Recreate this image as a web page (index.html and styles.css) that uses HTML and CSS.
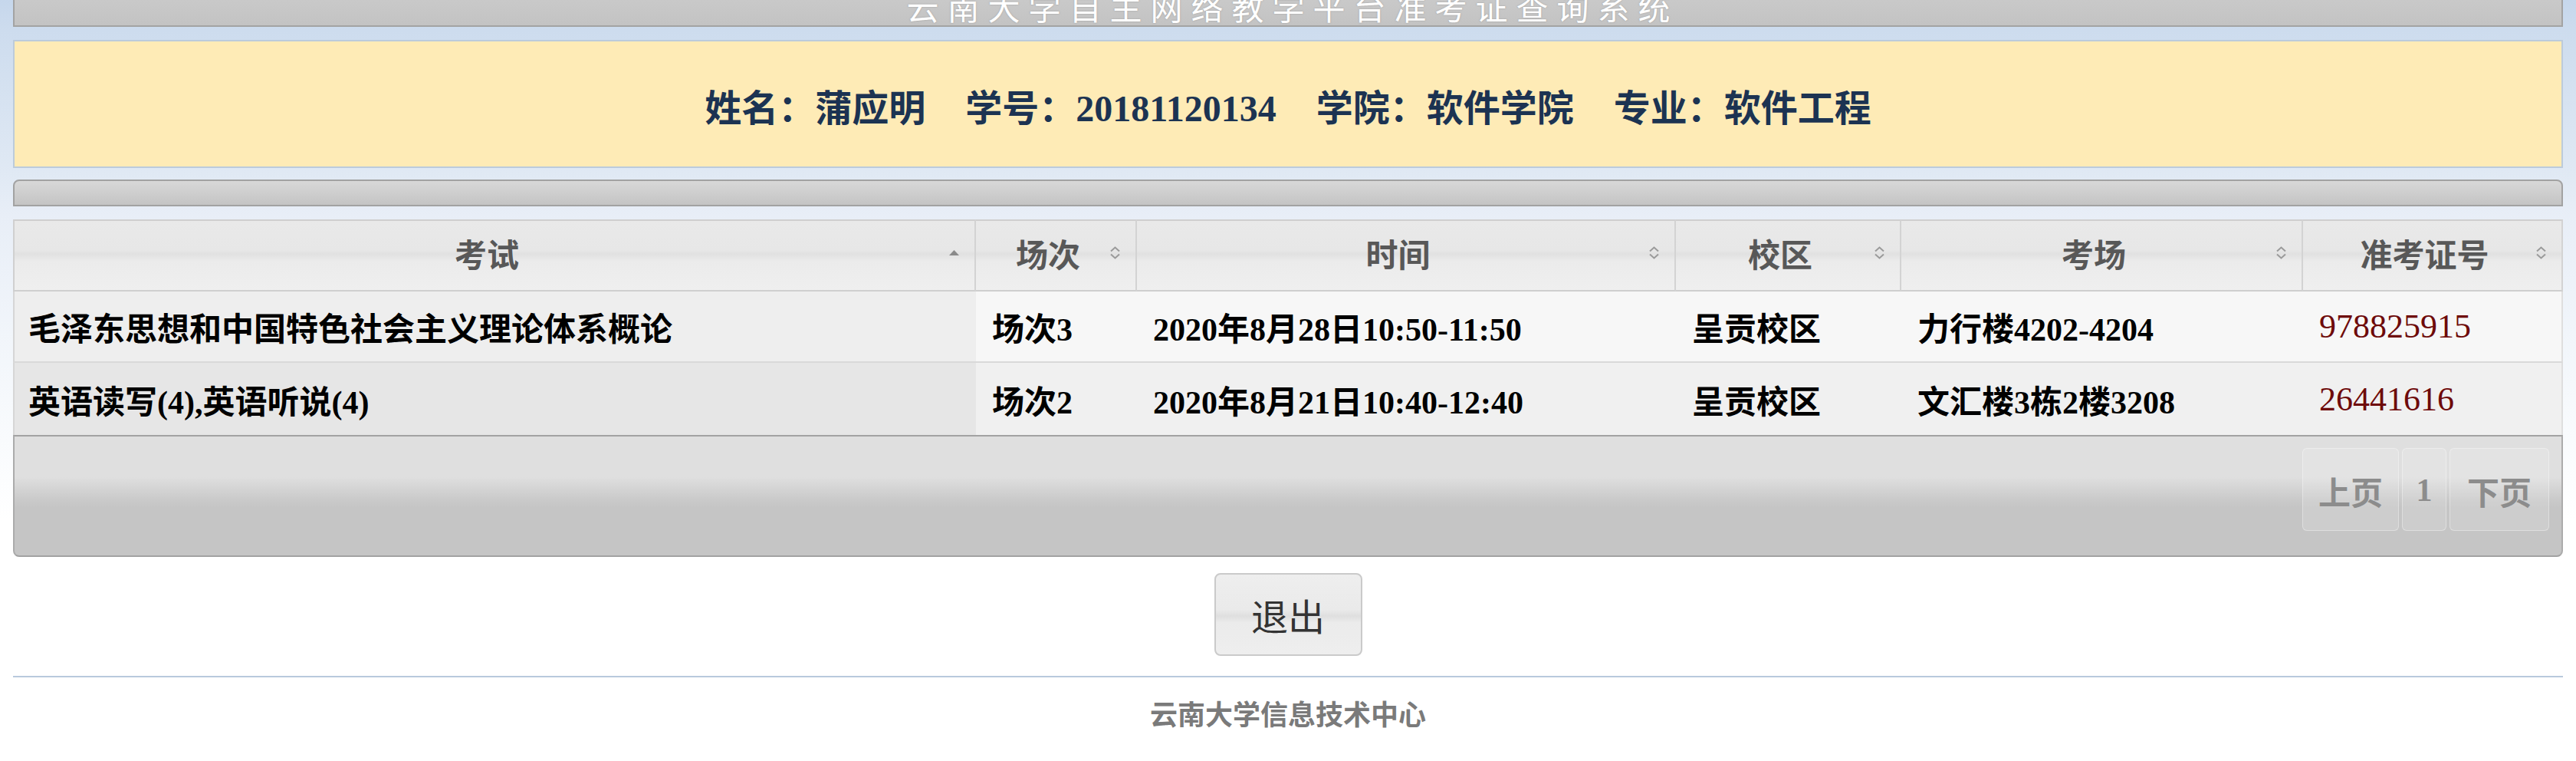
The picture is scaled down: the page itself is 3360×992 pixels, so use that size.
FILE: index.html
```html
<!DOCTYPE html>
<html lang="zh-CN">
<head>
<meta charset="utf-8">
<title>云南大学自主网络教学平台准考证查询系统</title>
<link rel="stylesheet" href="styles.css">
</head>
<body>
<div class="page">
  <div class="titlebar"><h1>云南大学自主网络教学平台准考证查询系统</h1></div>

  <div class="info">
    <span>姓名：蒲应明</span>
    <span>学号：20181120134</span>
    <span>学院：软件学院</span>
    <span>专业：软件工程</span>
  </div>

  <div class="toolbar"></div>

  <table class="grid">
    <colgroup>
      <col class="c1"><col class="c2"><col class="c3"><col class="c4"><col class="c5"><col class="c6">
    </colgroup>
    <thead>
      <tr>
        <th class="first"><div class="th-in"><span class="lbl">考试</span><svg class="ico" viewBox="0 0 15 19" width="15" height="19"><path d="M1 13 L7.5 6 L14 13 Z" fill="#8a8a8a"/></svg></div></th>
        <th><div class="th-in"><span class="lbl">场次</span><svg class="ico" viewBox="0 0 15 19" width="15" height="19"><path d="M2 7.5 L7.5 2.5 L13 7.5 M2 11.5 L7.5 16.5 L13 11.5" fill="none" stroke="#9a9a9a" stroke-width="2"/></svg></div></th>
        <th><div class="th-in"><span class="lbl">时间</span><svg class="ico" viewBox="0 0 15 19" width="15" height="19"><path d="M2 7.5 L7.5 2.5 L13 7.5 M2 11.5 L7.5 16.5 L13 11.5" fill="none" stroke="#9a9a9a" stroke-width="2"/></svg></div></th>
        <th><div class="th-in"><span class="lbl">校区</span><svg class="ico" viewBox="0 0 15 19" width="15" height="19"><path d="M2 7.5 L7.5 2.5 L13 7.5 M2 11.5 L7.5 16.5 L13 11.5" fill="none" stroke="#9a9a9a" stroke-width="2"/></svg></div></th>
        <th><div class="th-in"><span class="lbl">考场</span><svg class="ico" viewBox="0 0 15 19" width="15" height="19"><path d="M2 7.5 L7.5 2.5 L13 7.5 M2 11.5 L7.5 16.5 L13 11.5" fill="none" stroke="#9a9a9a" stroke-width="2"/></svg></div></th>
        <th class="last"><div class="th-in"><span class="lbl">准考证号</span><svg class="ico" viewBox="0 0 15 19" width="15" height="19"><path d="M2 7.5 L7.5 2.5 L13 7.5 M2 11.5 L7.5 16.5 L13 11.5" fill="none" stroke="#9a9a9a" stroke-width="2"/></svg></div></th>
      </tr>
    </thead>
    <tbody>
      <tr class="odd">
        <td class="first">毛泽东思想和中国特色社会主义理论体系概论</td>
        <td>场次3</td>
        <td>2020年8月28日10:50-11:50</td>
        <td>呈贡校区</td>
        <td>力行楼4202-4204</td>
        <td class="last num">978825915</td>
      </tr>
      <tr class="even">
        <td class="first">英语读写(4),英语听说(4)</td>
        <td>场次2</td>
        <td>2020年8月21日10:40-12:40</td>
        <td>呈贡校区</td>
        <td>文汇楼3栋2楼3208</td>
        <td class="last num">26441616</td>
      </tr>
    </tbody>
  </table>

  <div class="pagerbar">
    <span class="pg w1">上页</span>
    <span class="pg w2">1</span>
    <span class="pg w3">下页</span>
  </div>

  <div class="actions"><button class="exit" type="button">退出</button></div>

  <div class="rule"></div>

  <div class="footer">云南大学信息技术中心</div>
</div>
</body>
</html>
```

FILE: styles.css
```css
html, body {
  margin: 0;
  padding: 0;
}
body {
  min-height: 992px;
  background-color: #ffffff;
  background-image: linear-gradient(180deg, #c6d7ec 0px, #cddcee 40px, #e0e9f4 225px, #e8eef7 280px, #f6f9fc 520px, #ffffff 680px);
  background-repeat: no-repeat;
  font-family: "Liberation Serif", "Noto Sans CJK SC", serif;
}
.page {
  padding: 0 17px;
}

/* title bar (scrolled partly out of view) */
.titlebar {
  height: 33px;
  overflow: hidden;
  background: linear-gradient(180deg, #c9c9c9, #c3c3c3);
  border: 2px solid #a3a3a3;
  border-top: 0;
  text-align: center;
}
.titlebar h1 {
  margin: -12px 0 0;
  padding-left: 12px;
  font: 400 42px/40px "Noto Sans CJK SC", sans-serif;
  letter-spacing: 11px;
  color: #ffffff;
  text-shadow: 0 0 2px rgba(120, 120, 120, 0.6);
}

/* student info */
.info {
  margin-top: 17px;
  height: 161px;
  border: 2px solid #bccbdb;
  background: #feebb6;
  display: flex;
  align-items: center;
  justify-content: center;
  gap: 52px;
  font: 700 48px "Liberation Serif", "Noto Sans CJK SC", serif;
  color: #1c3352;
  padding-top: 2px;
  box-sizing: content-box;
}

/* empty toolbar */
.toolbar {
  margin-top: 15px;
  height: 31px;
  border: 2px solid #a2a2a2;
  border-radius: 8px 8px 0 0;
  background: linear-gradient(180deg, #d8d8d8, #c4c4c4);
}

/* table */
.grid {
  margin-top: 17px;
  width: 100%;
  table-layout: fixed;
  border-collapse: separate;
  border-spacing: 0;
}
.c1 { width: 1256px; }
.c2 { width: 210px; }
.c3 { width: 703px; }
.c4 { width: 294px; }
.c5 { width: 524px; }
.c6 { width: 339px; }

.grid th {
  height: 82px;
  padding: 0 19px 8px 14px;
  border-top: 2px solid #cfcfcf;
  border-bottom: 2px solid #cfcfcf;
  border-right: 2px solid #d3d3d3;
  background: linear-gradient(180deg, #e9e9e9 0%, #e7e7e7 42%, #e1e1e1 48%, #ebebeb 58%, #efefef 100%);
  font: 700 42px "Liberation Serif", "Noto Sans CJK SC", serif;
  color: #585858;
  vertical-align: middle;
}
.grid th.first { border-left: 2px solid #d0d0d0; }
.th-in {
  display: flex;
  align-items: center;
}
.lbl {
  flex: 1;
  text-align: center;
  white-space: nowrap;
}
.ico {
  flex: none;
  display: block;
}

.grid td {
  height: 91px;
  padding: 0 20px 0 21px;
  border-bottom: 2px solid #d9d9d9;
  font: 700 42px "Liberation Serif", "Noto Sans CJK SC", serif;
  color: #000000;
  vertical-align: middle;
  white-space: nowrap;
  background: #f7f7f7;
}
.grid tr:last-child td {
  height: 94px;
  border-bottom: 0;
}
.grid td.first {
  border-left: 2px solid #d6d6d6;
  padding-left: 18px;
  background: #eeeeee;
}
.grid td.last { border-right: 2px solid #dedede; }
.grid tr.even td { background: #f0f0f0; }
.grid tr.even td.first { background: #e6e6e6; }
.grid td.num {
  font-weight: 400;
  font-size: 44px;
  color: #6e0a0a;
}

/* pagination bar */
.pagerbar {
  height: 140px;
  padding: 15px 16px 0 0;
  border: 2px solid #a2a2a2;
  border-left-color: #ababab;
  border-right-color: #ababab;
  border-radius: 0 0 8px 8px;
  background: linear-gradient(180deg, #dfdfdf 0%, #dfdfdf 34%, #cbcbcb 52%, #c5c5c5 60%, #c5c5c5 100%);
  display: flex;
  justify-content: flex-end;
  align-items: flex-start;
  gap: 4px;
}
.pg {
  box-sizing: border-box;
  height: 108px;
  border: 1px solid rgba(255, 255, 255, 0.35);
  border-radius: 6px;
  background: rgba(255, 255, 255, 0.14);
  color: #8c8c8c;
  font: 700 42px "Liberation Serif", "Noto Sans CJK SC", serif;
  display: flex;
  align-items: center;
  justify-content: center;
  padding-top: 2px;
}
.w1 { width: 126px; }
.w2 { width: 58px; }
.w3 { width: 130px; }

/* exit */
.actions {
  margin-top: 21px;
  display: flex;
  justify-content: center;
}
.exit {
  box-sizing: border-box;
  width: 193px;
  height: 108px;
  padding: 0;
  border: 2px solid #cacaca;
  border-radius: 8px;
  background: linear-gradient(180deg, #eeeeee 0%, #eaeaea 44%, #dfdfdf 52%, #ebebeb 60%, #eeeeee 100%);
  font: 400 48px "Noto Sans CJK SC", sans-serif;
  color: #333333;
}

.rule {
  margin-top: 26px;
  height: 2px;
  background: #b9c9dd;
}

.footer {
  margin-top: 20px;
  text-align: center;
  font: 700 36px/52px "Noto Sans CJK SC", sans-serif;
  color: #7a7a7a;
}
```
